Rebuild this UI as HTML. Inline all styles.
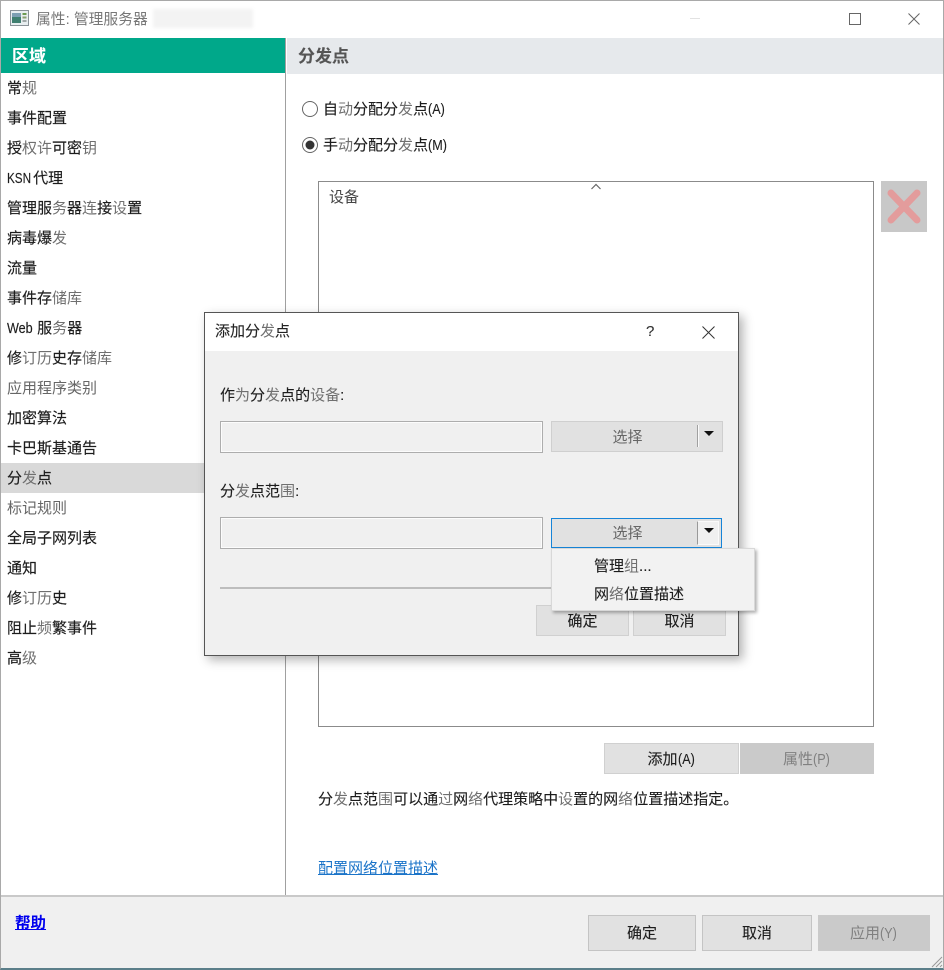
<!DOCTYPE html>
<html lang="zh"><head><meta charset="utf-8"><title>属性</title>
<style>
*{box-sizing:border-box}
html,body{margin:0;padding:0}
body{width:944px;height:970px;overflow:hidden;position:relative;background:#fff;font:15px/20px "Liberation Sans","Noto Sans CJK SC",sans-serif;color:#1c1c1c}
.a{position:absolute}
.t{position:absolute;white-space:nowrap;margin-top:1px;-webkit-text-stroke:.12px currentColor}
.nav{position:absolute;left:7px;white-space:nowrap;height:20px;line-height:20px;margin-top:1px;color:#1c1c1c;-webkit-text-stroke:.15px currentColor}
.btn{position:absolute;background:#e1e1e1;border:1px solid #d0d0d0;text-align:center;color:#1c1c1c;-webkit-text-stroke:.12px currentColor}
.dis{background:#cacaca;border-color:#cacaca;color:#808080}
.inp{position:absolute;background:#f0f0f0;border:1px solid #adadad;box-shadow:inset 0 0 0 1px #fcfcfc}
i{font-style:normal;color:#6f6f6f;-webkit-text-stroke:0}
.l{display:inline-block;transform:scaleX(.84);transform-origin:0 50%}
</style></head><body>
<div class="a" style="left:0;top:0;width:944px;height:970px;border:1px solid #a9a9a9;border-bottom:2px solid #5b7f8a"></div>

<!-- title bar -->
<svg class="a" style="left:10px;top:10px" width="19" height="16" viewBox="0 0 19 16"><rect x=".5" y=".5" width="18" height="15" fill="#e8eef0" stroke="#8a9298"/><rect x="2" y="3" width="9" height="10" fill="#3f7f70"/><rect x="2" y="3" width="9" height="4" fill="#7d9fb2"/><rect x="12.5" y="3" width="4" height="2" fill="#6a9a50"/><rect x="12.5" y="6.5" width="4" height="2" fill="#88a070"/><rect x="12.5" y="10" width="4" height="2" fill="#a0a8a8"/></svg>
<div class="t" style="left:36px;top:9px;color:#777;-webkit-text-stroke:0;font-size:14.800px">属性: 管理服务器</div>
<div class="a" style="left:153px;top:9px;width:100px;height:19px;background:#f3f3f3;filter:blur(1.5px)"></div>
<div class="a" style="left:690px;top:18px;width:10px;height:1px;background:#e2e2e2"></div>
<div class="a" style="left:849px;top:13px;width:12px;height:12px;border:1px solid #666"></div>
<svg class="a" style="left:908px;top:13px" width="12" height="12" viewBox="0 0 12 12"><path d="M.5.5l11 11M11.500.5l-11 11" stroke="#666" fill="none"/></svg>

<!-- sidebar -->
<div class="a" style="left:1px;top:38px;width:285px;height:35px;background:#00a88a"></div>
<div class="t" style="left:12px;top:46px;color:#fff;font-weight:bold;font-size:17px">区域</div>
<div class="a" style="left:285px;top:38px;width:1px;height:857px;background:#a0a0a0"></div>
<div class="a" style="left:1px;top:463px;width:284px;height:30px;background:#d9d9d9"></div>
<div class="nav" style="top:78px">常<i>规</i></div>
<div class="nav" style="top:108px">事件配置</div>
<div class="nav" style="top:138px">授<i>权许</i>可密<i>钥</i></div>
<div class="nav" style="top:168px"><span class="l" style="width:22px;transform:scaleX(.78)">KSN</span> 代理</div>
<div class="nav" style="top:198px">管理服<i>务</i>器<i>连</i>接<i>设</i>置</div>
<div class="nav" style="top:228px">病毒爆<i>发</i></div>
<div class="nav" style="top:258px">流量</div>
<div class="nav" style="top:288px">事件存<i>储库</i></div>
<div class="nav" style="top:318px"><span class="l" style="width:26px">Web</span> 服<i>务</i>器</div>
<div class="nav" style="top:348px">修<i>订历</i>史存<i>储库</i></div>
<div class="nav" style="top:378px;color:#666;-webkit-text-stroke:0">应用程序类别</div>
<div class="nav" style="top:408px">加密算法</div>
<div class="nav" style="top:438px">卡巴斯基通告</div>
<div class="nav" style="top:468px">分<i>发</i>点</div>
<div class="nav" style="top:498px;color:#666;-webkit-text-stroke:0">标记规则</div>
<div class="nav" style="top:528px">全局子网列表</div>
<div class="nav" style="top:558px">通知</div>
<div class="nav" style="top:588px">修<i>订历</i>史</div>
<div class="nav" style="top:618px">阻止<i>频</i>繁事件</div>
<div class="nav" style="top:648px">高<i>级</i></div>

<!-- right panel -->
<div class="a" style="left:287px;top:38px;width:656px;height:36px;background:#e6e9ec"></div>
<div class="t" style="left:298px;top:46px;color:#555;font-weight:bold;font-size:17px">分发点</div>
<svg class="a" style="left:301px;top:100px" width="18" height="54" viewBox="0 0 18 54"><circle cx="9" cy="9" r="7.500" fill="#fff" stroke="#666"/><circle cx="9" cy="45" r="7.500" fill="#fff" stroke="#666"/><circle cx="9" cy="45" r="4.500" fill="#333"/></svg>
<div class="t" style="left:323px;top:99px">自<i>动</i>分配分<i>发</i>点<span class="l" style="width:17px">(A)</span></div>
<div class="t" style="left:323px;top:135px">手<i>动</i>分配分<i>发</i>点<span class="l" style="width:20px">(M)</span></div>
<div class="a" style="left:318px;top:181px;width:556px;height:546px;border:1px solid #8b8b8b;background:#fff"></div>
<svg class="a" style="left:590px;top:183px" width="12" height="7" viewBox="0 0 12 7"><path d="M1.500 6L6 1.500 10.500 6" stroke="#666" fill="none" stroke-width="1.200"/></svg>
<div class="t" style="left:329px;top:187px;color:#444;-webkit-text-stroke:0">设备</div>
<div class="a" style="left:881px;top:181px;width:46px;height:51px;background:#c8c8c8"></div>
<svg class="a" style="left:881px;top:181px" width="46" height="51" viewBox="0 0 46 51"><path d="M10 12L36 39M36 12L10 39" stroke="#e39c9c" stroke-width="7" stroke-linecap="round" fill="none"/></svg>
<div class="btn" style="left:604px;top:743px;width:135px;height:31px;line-height:31px">添加<span class="l" style="width:18px">(A)</span></div>
<div class="btn dis" style="left:740px;top:743px;width:134px;height:31px;line-height:31px;-webkit-text-stroke:0">属性<span class="l" style="width:18px">(P)</span></div>
<div class="t" style="left:318px;top:789px">分<i>发</i>点范<i>围</i>可以通<i>过</i>网<i>络</i>代理策略中<i>设</i>置的网<i>络</i>位置描述指定。</div>
<div class="t" style="left:318px;top:858px;color:#1a73c8;text-decoration:underline;-webkit-text-stroke:0">配置网络位置描述</div>

<!-- footer -->
<div class="a" style="left:1px;top:895px;width:942px;height:73px;background:#f0f0f0;border-top:2px solid #c9c9c9"></div>
<div class="t" style="left:15px;top:913px;color:#0000ee;text-decoration:underline;font-weight:bold;-webkit-text-stroke:0;font-size:15.500px">帮助</div>
<div class="btn" style="left:588px;top:915px;width:108px;height:36px;line-height:36px;border-color:#c4c4c4">确定</div>
<div class="btn" style="left:702px;top:915px;width:110px;height:36px;line-height:36px;border-color:#c4c4c4">取消</div>
<div class="btn dis" style="left:818px;top:915px;width:112px;height:36px;line-height:36px;-webkit-text-stroke:0">应用<span class="l" style="width:18px">(Y)</span></div>
<svg class="a" style="left:930px;top:955px" width="13" height="13" viewBox="0 0 13 13"><path d="M12 2L2 12M12 6L6 12M12 10L10 12" stroke="#999" fill="none"/></svg>

<!-- modal -->
<div class="a" style="left:204px;top:312px;width:535px;height:344px;background:#f0f0f0;border:1px solid #555;box-shadow:4px 4px 10px rgba(0,0,0,.3)"></div>
<div class="a" style="left:205px;top:313px;width:533px;height:38px;background:#fff"></div>
<div class="t" style="left:215px;top:321px;color:#222">添加分<i>发</i>点</div>
<div class="t" style="left:646px;top:321px;color:#333">?</div>
<svg class="a" style="left:702px;top:326px" width="13" height="13" viewBox="0 0 13 13"><path d="M.5.5l12 12M12.500.5l-12 12" stroke="#333" fill="none"/></svg>
<div class="t" style="left:220px;top:385px">作<i>为</i>分<i>发</i>点的<i>设备</i>:</div>
<div class="inp" style="left:220px;top:421px;width:323px;height:32px"></div>
<div class="btn" style="left:551px;top:421px;width:172px;height:31px;line-height:31px;color:#666;-webkit-text-stroke:0;padding-right:19px;border-color:#cfcfcf;border-width:1.500px">选择</div>
<div class="a" style="left:697px;top:425px;width:1px;height:22px;background:#a0a0a0"></div>
<div class="a" style="left:698px;top:425px;width:1px;height:22px;background:#fafafa"></div>
<div class="a" style="left:704px;top:431px;border:5px solid transparent;border-top:5px solid #111;border-bottom:0"></div>
<div class="t" style="left:220px;top:481px">分<i>发</i>点范<i>围</i>:</div>
<div class="inp" style="left:220px;top:517px;width:323px;height:32px"></div>
<div class="btn" style="left:551px;top:518px;width:171px;height:30px;line-height:30px;color:#666;-webkit-text-stroke:0;padding-right:18px;border-color:#1684d8">选择</div>
<div class="a" style="left:697px;top:521px;width:22px;height:24px;background:#f0f0f0;border:1px solid #fafafa;border-left:1px solid #999"></div>
<div class="a" style="left:704px;top:528px;border:5px solid transparent;border-top:5px solid #111;border-bottom:0"></div>
<div class="a" style="left:220px;top:587px;width:505px;height:2px;background:#bdbdbd"></div>
<div class="btn" style="left:536px;top:605px;width:93px;height:31px;line-height:31px;border-color:#d0d0d0">确定</div>
<div class="btn" style="left:633px;top:605px;width:93px;height:31px;line-height:31px;border-color:#d0d0d0">取消</div>

<!-- dropdown -->
<div class="a" style="left:551px;top:548px;width:204px;height:63px;background:#f2f2f2;border:1px solid #d8d8d8;box-shadow:2px 2px 3px rgba(0,0,0,.3)"></div>
<div class="t" style="left:594px;top:556px">管理<i>组</i>...</div>
<div class="t" style="left:594px;top:584px">网<i>络</i>位置描述</div>
</body></html>
